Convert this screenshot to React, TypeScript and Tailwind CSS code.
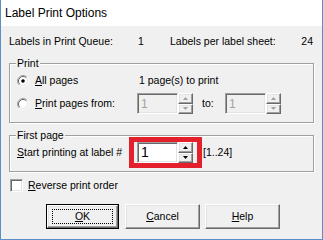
import React from "react";

const sunken =
  "border border-t-[#a0a0a0] border-l-[#a0a0a0] border-r-white border-b-white shadow-[inset_1px_1px_0_#696969,inset_-1px_-1px_0_#e3e3e3]";
const raised =
  "border border-t-white border-l-white border-r-[#696969] border-b-[#696969] shadow-[inset_-1px_-1px_0_#a0a0a0,inset_1px_1px_0_#e3e3e3]";

function Radio({ checked }: { checked?: boolean }) {
  return (
    <svg width="12" height="12" viewBox="0 0 12 12" className="shrink-0">
      <circle cx="6" cy="6" r="4.5" fill="#fff" />
      <path d="M2.11 9.89 A5.5 5.5 0 0 1 9.89 2.11" fill="none" stroke="#a0a0a0" />
      <path d="M9.89 2.11 A5.5 5.5 0 0 1 2.11 9.89" fill="none" stroke="#fff" />
      <path d="M2.82 9.18 A4.5 4.5 0 0 1 9.18 2.82" fill="none" stroke="#696969" />
      <path d="M9.18 2.82 A4.5 4.5 0 0 1 2.82 9.18" fill="none" stroke="#e3e3e3" />
      {checked ? <circle cx="6" cy="6" r="1.8" fill="#000" /> : null}
    </svg>
  );
}

function Arrow({ up, disabled }: { up?: boolean; disabled?: boolean }) {
  const color = disabled ? "#a0a0a0" : "#000";
  return (
    <svg width="5" height="3" viewBox="0 0 5 3">
      {up ? <polygon points="2.5,0 5,3 0,3" fill={color} /> : <polygon points="0,0 5,0 2.5,3" fill={color} />}
    </svg>
  );
}

function Spin({ disabled, value, big }: { disabled?: boolean; value: string; big?: boolean }) {
  return (
    <div className="flex h-[21px]">
      <div
        className={`${sunken} flex h-full w-[41px] items-center pl-[3px] ${
          disabled ? "bg-[#f0f0f0] text-[#a0a0a0]" : "bg-white text-black"
        } ${big ? "text-[14px]" : "text-[12px]"}`}
      >
        {value}
      </div>
      <div className="flex h-full w-[15px] flex-col">
        <div className={`${raised} flex flex-1 items-center justify-center bg-[#f0f0f0]`}>
          <Arrow up disabled={disabled} />
        </div>
        <div className={`${raised} flex flex-1 items-center justify-center bg-[#f0f0f0]`}>
          <Arrow disabled={disabled} />
        </div>
      </div>
    </div>
  );
}

function Group({ label, className, children }: { label: string; className: string; children: React.ReactNode }) {
  return (
    <div
      className={`relative mx-[8px] border border-[#a0a0a0] shadow-[inset_1px_1px_0_#fff,1px_1px_0_#fff] ${className}`}
    >
      <span className="absolute left-[6px] top-[-8px] bg-[#f0f0f0] px-[1px] leading-[14px]">{label}</span>
      {children}
    </div>
  );
}

function Button({ children, isDefault }: { children: React.ReactNode; isDefault?: boolean }) {
  if (isDefault) {
    return (
      <div className="h-[25px] w-[73px] border border-black">
        <div className={`${raised} flex h-full w-full items-center justify-center bg-[#f0f0f0]`}>
          <div className="flex h-[15px] w-[61px] items-center justify-center border border-dotted border-black">
            {children}
          </div>
        </div>
      </div>
    );
  }
  return (
    <div className={`${raised} flex h-[25px] w-[75px] items-center justify-center bg-[#f0f0f0]`}>{children}</div>
  );
}

export default function App() {
  return (
    <div className="flex h-[240px] w-[323px] flex-col border-x border-b border-[#5a8fc8] bg-[#f0f0f0] font-['Liberation_Sans',Arial,sans-serif] text-[10.5px] text-black">
      <div className="flex h-[26px] shrink-0 items-center bg-white pl-[4px] text-[12px]">Label Print Options</div>

      <div className="mt-[8px] flex h-[14px] items-center leading-[14px]">
        <span className="w-[137px] pl-[8px]">Labels in Print Queue:</span>
        <span className="w-[32px]">1</span>
        <span className="flex-1">Labels per label sheet:</span>
        <span className="pr-[9px]">24</span>
      </div>

      <Group label="Print" className="mt-[15px] h-[60px] pt-[10px]">
        <div className="flex h-[14px] items-center">
          <div className="flex w-[129px] items-center pl-[7px]">
            <Radio checked />
            <span className="ml-[6px]">
              <span className="underline">A</span>ll pages
            </span>
          </div>
          <span>1 page(s) to print</span>
        </div>
        <div className="mt-[5px] flex h-[21px] items-center">
          <div className="flex w-[127px] items-center pl-[7px]">
            <Radio />
            <span className="ml-[6px]">
              <span className="underline">P</span>rint pages from:
            </span>
          </div>
          <Spin disabled value="1" />
          <span className="ml-[9px] w-[23px]">to:</span>
          <Spin disabled value="1" />
        </div>
      </Group>

      <Group label="First page" className="mt-[12px] h-[37px] pt-[1px]">
        <div className="flex items-center">
          <span className="w-[119px] pl-[7px]">
            <span className="underline">S</span>tart printing at label #
          </span>
          <div className="border-[5px] border-[#e3202b] pl-[3px] pr-[4px]">
            <Spin value="1" big />
          </div>
          <span className="ml-[1px]">[1..24]</span>
        </div>
      </Group>

      <div className="mt-[7px] flex h-[13px] items-center pl-[9px]">
        <div className={`${sunken} h-[13px] w-[13px] bg-white`} />
        <span className="ml-[5px]">
          <span className="underline">R</span>everse print order
        </span>
      </div>

      <div className="mt-[12px] flex pl-[45px]">
        <Button isDefault>
          <span className="underline">O</span>K
        </Button>
        <div className="ml-[6px]">
          <Button>
            <span className="underline">C</span>ancel
          </Button>
        </div>
        <div className="ml-[5px]">
          <Button>
            <span className="underline">H</span>elp
          </Button>
        </div>
      </div>
    </div>
  );
}
